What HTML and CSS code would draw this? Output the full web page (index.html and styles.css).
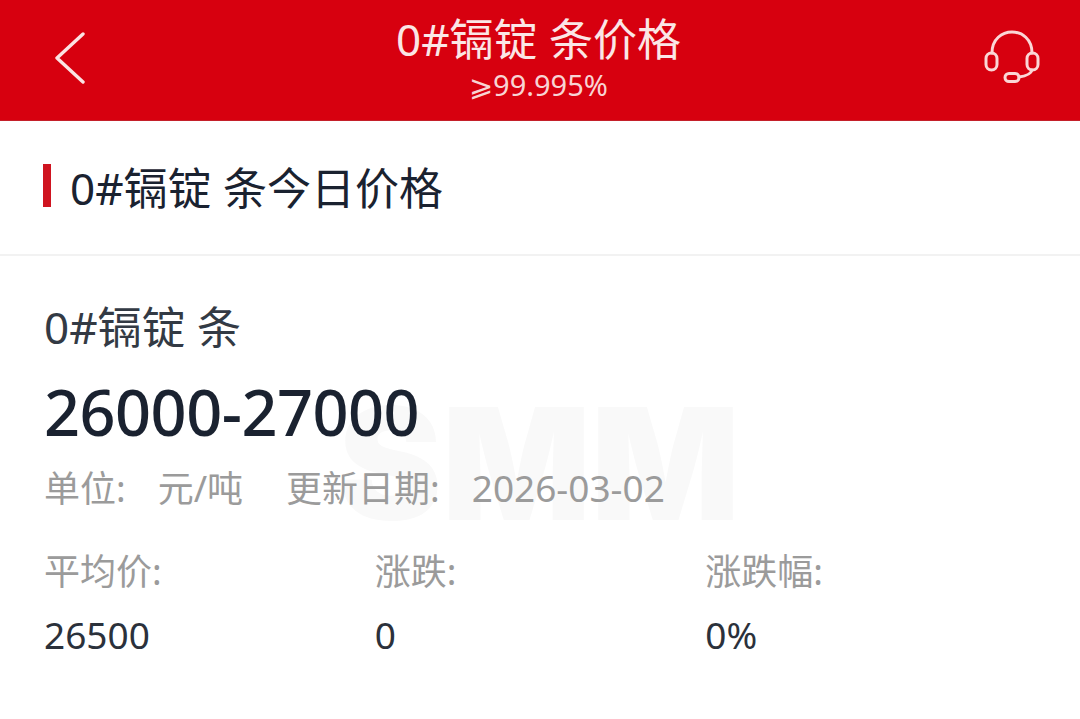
FILE: index.html

```html
<!DOCTYPE html>
<html lang="zh-CN">
<head>
  <meta charset="UTF-8">
  <meta name="viewport" content="width=device-width, initial-scale=1.0">
  <title>0#镉锭 条价格</title>
  <link rel="stylesheet" href="styles.css">
</head>
<body>
  <header class="topbar">
    <svg class="back-icon" viewBox="0 0 32 52" width="32" height="52" fill="none" stroke="#fbe3e3" stroke-width="3.4" stroke-linecap="round" stroke-linejoin="round">
      <path d="M29 2 L3 26 L29 50"/>
    </svg>
    <div class="topbar-title">
      <div class="topbar-name">0#镉锭 条价格</div>
      <div class="topbar-sub">⩾99.995%</div>
    </div>
    <svg class="service-icon" viewBox="0 0 56 53" width="56" height="53" fill="none" stroke="#fbd6d6" stroke-width="3" stroke-linecap="round">
      <path d="M8 23 C8 -5 48 -5 48 23"/>
      <rect x="2" y="23" width="11" height="17" rx="5.5"/>
      <rect x="43" y="23" width="11" height="17" rx="5.5"/>
      <path d="M48 40 C47 44 42 46 35 47"/>
      <rect x="21" y="43.5" width="14" height="8" rx="4"/>
    </svg>
  </header>

  <section class="section-head">
    <span class="section-mark"></span>
    <h2 class="section-title">0#镉锭 条今日价格</h2>
  </section>

  <main class="price-card">
    <div class="watermark">SMM</div>
    <div class="price-name">0#镉锭 条</div>
    <div class="price-range">26000-27000</div>
    <div class="price-meta">
      <span class="meta-label">单位:</span><span class="meta-unit">元/吨</span><span class="meta-label">更新日期:</span><span class="meta-date">2026-03-02</span>
    </div>
    <div class="stats">
      <div class="stat">
        <div class="stat-label">平均价:</div>
        <div class="stat-value">26500</div>
      </div>
      <div class="stat">
        <div class="stat-label">涨跌:</div>
        <div class="stat-value">0</div>
      </div>
      <div class="stat">
        <div class="stat-label">涨跌幅:</div>
        <div class="stat-value">0%</div>
      </div>
    </div>
  </main>
</body>
</html>
```

FILE: styles.css

```css
body {
  font-family: "Noto Sans", "Noto Sans CJK SC", sans-serif;
  background-color: #ffffff;
  color: #1a2230;
  margin: 0;
  height: 719px;
  overflow: hidden;
}
.topbar {
  height: 120px;
  background-color: #d7000f;
  border-bottom: 1px solid #c4202a;
  display: flex;
  align-items: center;
  justify-content: space-between;
  padding: 0 40px 0 54px;
  color: #fbe6e6;
}
.back-icon {
  margin-top: -4px;
}
.service-icon {
  margin-top: -8px;
}
.topbar-title {
  text-align: center;
  margin-left: 7px;
}
.topbar-name {
  font-size: 44px;
  line-height: 58px;
  margin-top: -9px;
}
.topbar-sub {
  font-size: 29px;
  line-height: 34px;
  color: #f8d4d4;
}
.section-head {
  height: 129px;
  padding-bottom: 4px;
  border-bottom: 2px solid #f2f2f2;
  display: flex;
  align-items: center;
  padding-left: 43px;
  gap: 19px;
}
.section-mark {
  width: 8px;
  height: 43px;
  background-color: #cf1420;
}
.section-title {
  font-size: 44px;
  font-weight: 400;
  margin: 1px 0 0;
}
.price-card {
  position: relative;
  padding: 44px 44px 0;
}
.watermark {
  position: absolute;
  left: 338px;
  top: 128px;
  font-family: "Inter", sans-serif;
  font-size: 156px;
  line-height: 160px;
  font-weight: 900;
  color: #f9f9f9;
}
.price-name,
.price-range,
.price-meta,
.stats {
  position: relative;
}
.price-name {
  font-size: 44px;
  line-height: 54px;
  color: #333a44;
}
.price-range {
  font-size: 63px;
  line-height: 72px;
  margin-top: 22px;
  letter-spacing: -0.5px;
  font-weight: 500;
}
.price-meta {
  display: flex;
  align-items: baseline;
  font-size: 36px;
  line-height: 46px;
  margin-top: 17px;
  color: #9b9b9b;
}
.meta-label {
  margin-right: 32px;
}
.meta-unit {
  margin-right: 43px;
}
.meta-date {
  font-size: 37px;
}
.stats {
  display: flex;
  margin-top: 37px;
}
.stat {
  width: 331px;
}
.stat-label {
  font-size: 36px;
  line-height: 46px;
  color: #9b9b9b;
}
.stat-value {
  font-size: 37px;
  line-height: 46px;
  margin-top: 17px;
  color: #2b313b;
}
```
